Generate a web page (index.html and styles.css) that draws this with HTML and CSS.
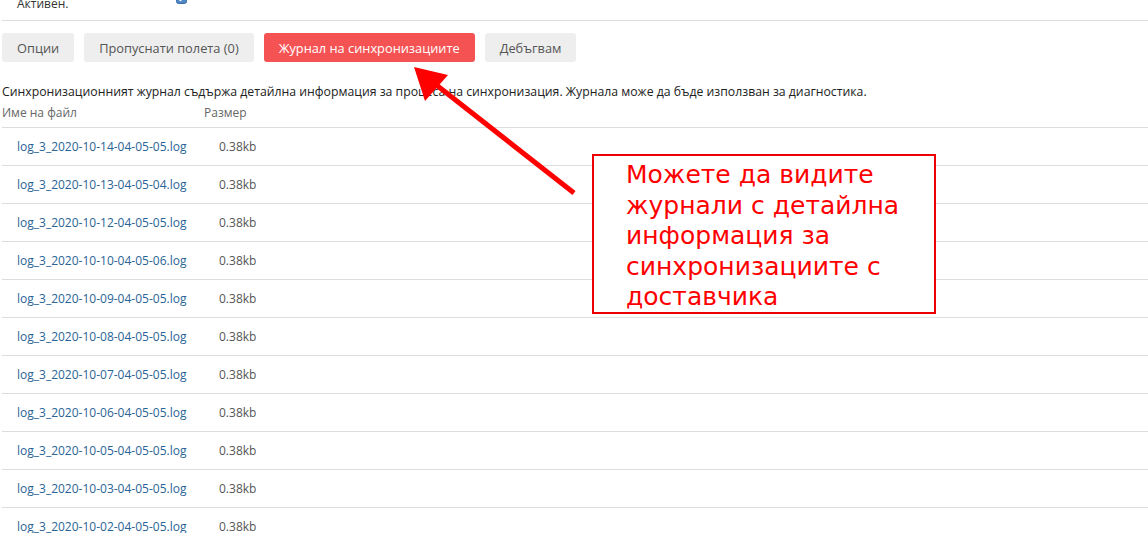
FILE: index.html
```html
<!DOCTYPE html>
<html lang="bg">
<head>
  <meta charset="UTF-8">
  <title>Журнал на синхронизациите</title>
  <link rel="stylesheet" href="styles.css">
</head>
<body>
  <div class="page">
    <div class="form-row">
      <span class="form-label">Активен.</span>
      <span class="checkbox">
        <svg width="11" height="11" viewBox="0 0 11 11">
          <rect x="0.5" y="0.5" width="10" height="10" rx="2" fill="#4f86c6" stroke="#3a6ea5"/>
          <path d="M2.5 5.5 L4.5 7.5 L8.5 3" fill="none" stroke="#fff" stroke-width="1.5"/>
        </svg>
      </span>
    </div>

    <div class="tabs">
      <button class="btn">Опции</button>
      <button class="btn">Пропуснати полета (0)</button>
      <button class="btn btn-active">Журнал на синхронизациите</button>
      <button class="btn">Дебъгвам</button>
    </div>

    <p class="intro">Синхронизационният журнал съдържа детайлна информация за процеса на синхронизация. Журнала може да бъде използван за диагностика.</p>

    <div class="log-table">
      <div class="log-head">
        <span>Име на файл</span>
        <span>Размер</span>
      </div>
      <div class="log-row"><a href="#">log_3_2020-10-14-04-05-05.log</a><span>0.38kb</span></div>
      <div class="log-row"><a href="#">log_3_2020-10-13-04-05-04.log</a><span>0.38kb</span></div>
      <div class="log-row"><a href="#">log_3_2020-10-12-04-05-05.log</a><span>0.38kb</span></div>
      <div class="log-row"><a href="#">log_3_2020-10-10-04-05-06.log</a><span>0.38kb</span></div>
      <div class="log-row"><a href="#">log_3_2020-10-09-04-05-05.log</a><span>0.38kb</span></div>
      <div class="log-row"><a href="#">log_3_2020-10-08-04-05-05.log</a><span>0.38kb</span></div>
      <div class="log-row"><a href="#">log_3_2020-10-07-04-05-05.log</a><span>0.38kb</span></div>
      <div class="log-row"><a href="#">log_3_2020-10-06-04-05-05.log</a><span>0.38kb</span></div>
      <div class="log-row"><a href="#">log_3_2020-10-05-04-05-05.log</a><span>0.38kb</span></div>
      <div class="log-row"><a href="#">log_3_2020-10-03-04-05-05.log</a><span>0.38kb</span></div>
      <div class="log-row"><a href="#">log_3_2020-10-02-04-05-05.log</a><span>0.38kb</span></div>
    </div>
  </div>

  <!-- annotation -->
  <svg class="arrow" width="1148" height="533" viewBox="0 0 1148 533">
    <line x1="574" y1="193" x2="430" y2="80" stroke="#f00" stroke-width="5"/>
    <polygon points="414,67 448,75 425,101" fill="#f00"/>
  </svg>
  <div class="callout">Можете да видите журнали с детайлна информация за синхронизациите с доставчика</div>
</body>
</html>
```

FILE: styles.css
```css
body {
  margin: 0;
  font-family: "Open Sans", sans-serif;
  font-size: 12px;
  color: #222;
  background: #fff;
  overflow: hidden;
}

.page {
  padding-left: 2px;
  margin-top: -14px;
}

.form-row {
  display: flex;
  align-items: center;
  height: 34px;
  border-bottom: 1px solid #ddd;
  padding-left: 15px;
  color: #333;
}

.form-label {
  width: 159px;
}

.checkbox {
  display: flex;
  margin-top: -10px;
}

.tabs {
  display: flex;
  gap: 10px;
  margin-top: 12px;
}

.btn {
  font-family: inherit;
  font-size: 12.8px;
  color: #555;
  background: #eee;
  border: none;
  border-radius: 3px;
  height: 29px;
  padding: 0 15px;
}

.btn-active {
  background: #f55353;
  color: #fff;
}

.intro {
  margin: 21px 0 0;
  line-height: 17px;
  font-size: 12.25px;
}

.log-head {
  display: grid;
  grid-template-columns: 202px auto;
  color: #666;
  line-height: 17px;
  padding: 4px 0 6px;
  border-bottom: 1px solid #ddd;
}

.log-row {
  display: grid;
  grid-template-columns: 202px auto;
  height: 37px;
  align-items: center;
  border-bottom: 1px solid #ddd;
  padding-left: 15px;
}

.log-row a {
  color: #2a6496;
  text-decoration: none;
}

.log-row span {
  color: #555;
}

.arrow {
  position: absolute;
  left: 0;
  top: 0;
  pointer-events: none;
}

.callout {
  position: absolute;
  left: 592px;
  top: 154px;
  width: 308px;
  height: 152px;
  border: 2px solid #e00;
  padding: 4px 0 0 32px;
  font-family: "DejaVu Sans", sans-serif;
  font-size: 25px;
  line-height: 30.5px;
  color: #f00;
  background: #fff;
}
```
